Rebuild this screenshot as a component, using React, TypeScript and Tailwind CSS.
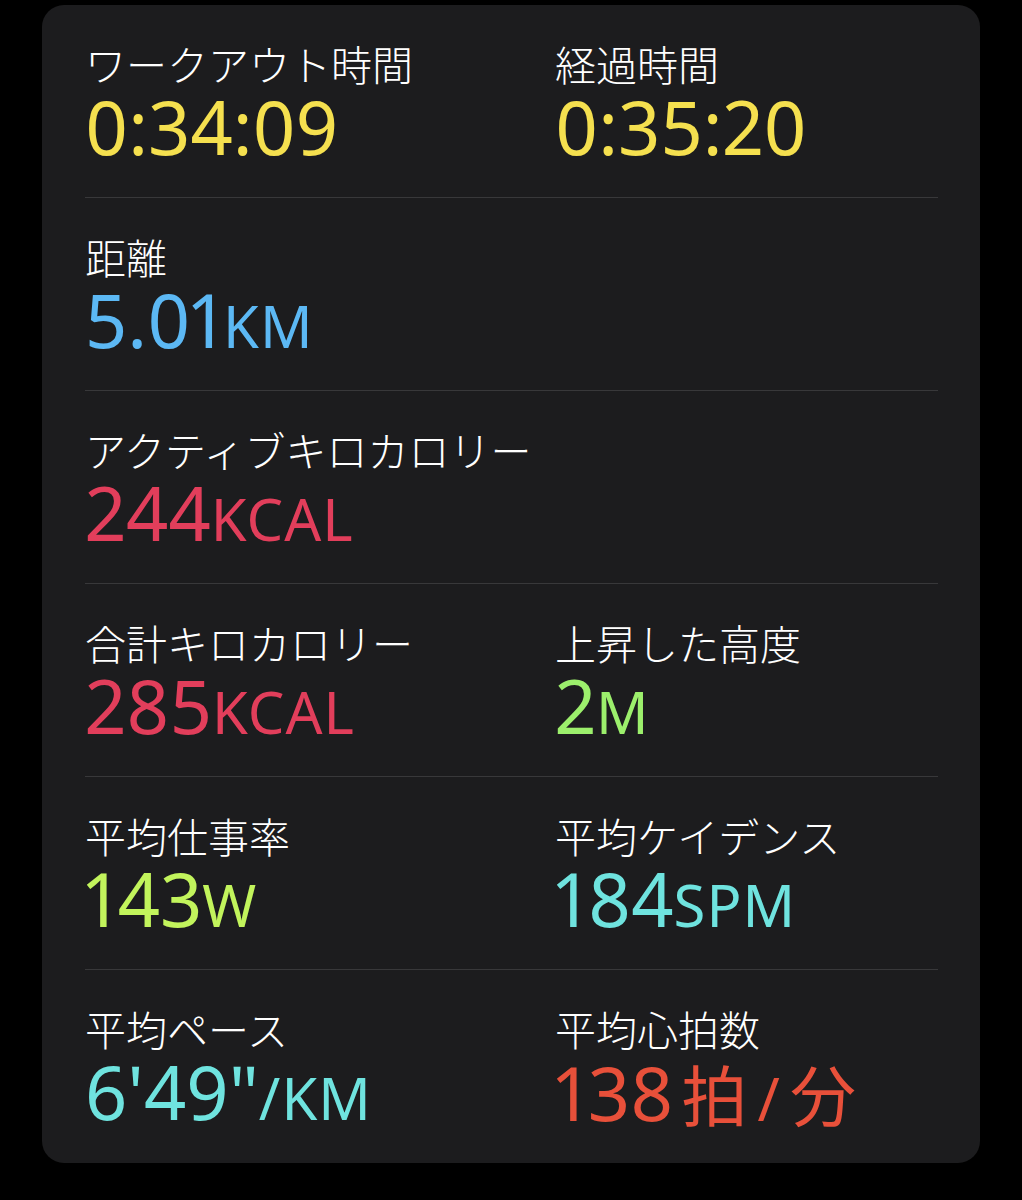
import React from "react";

const labelFont = { fontFamily: '"Noto Sans CJK JP", "Noto Sans", sans-serif' };

function Metric({
  label,
  value,
  unit,
  color,
}: {
  label: string;
  value: React.ReactNode;
  unit?: string;
  color: string;
}) {
  return (
    <div className="flex flex-col">
      <div className="text-[41px] leading-[48px] font-light text-white whitespace-nowrap" style={labelFont}>
        {label}
      </div>
      <div
        className={`text-[74px] leading-[80px] whitespace-nowrap proportional-nums [font-family:'Noto_Sans','Noto_Sans_CJK_JP',sans-serif] ${color}`}
      >
        {value}
        {unit && <span className="text-[58px] tracking-[1px] uppercase">{unit}</span>}
      </div>
    </div>
  );
}

function Row({ children, last }: { children: React.ReactNode; last?: boolean }) {
  return (
    <div
      className={`grid grid-cols-[470px_1fr] h-[193px] pt-[34px] ${
        last ? "" : "border-b border-[#38383a]"
      }`}
    >
      {children}
    </div>
  );
}

export default function App() {
  return (
    <div className="min-h-[1200px] w-full bg-black pt-[5px]">
      <div className="ml-[42px] w-[938px] h-[1158px] rounded-[22px] bg-[#1c1c1e] pl-[43px] pr-[42px]">
        <Row>
          <Metric label="ワークアウト時間" value="0:34:09" color="text-[#f5e04f]" />
          <Metric label="経過時間" value="0:35:20" color="text-[#f5e04f]" />
        </Row>
        <Row>
          <Metric label="距離" value="5.01" unit="km" color="text-[#5cb8f4]" />
        </Row>
        <Row>
          <Metric label="アクティブキロカロリー" value="244" unit="kcal" color="text-[#e23e5b]" />
        </Row>
        <Row>
          <Metric label="合計キロカロリー" value="285" unit="kcal" color="text-[#e23e5b]" />
          <Metric label="上昇した高度" value="2" unit="m" color="text-[#9cef6c]" />
        </Row>
        <Row>
          <Metric label="平均仕事率" value="143" unit="w" color="text-[#c2f45c]" />
          <Metric label="平均ケイデンス" value="184" unit="spm" color="text-[#6fe3df]" />
        </Row>
        <Row last>
          <Metric label="平均ペース" value={`6'49"`} unit="/km" color="text-[#6fe3df]" />
          <Metric
            label="平均心拍数"
            color="text-[#e8503a]"
            value={
              <>
                138
                <span className="ml-[8px] text-[66px]" style={labelFont}>
                  拍
                </span>
                <span className="mx-[10px] text-[60px]">/</span>
                <span className="text-[66px]" style={labelFont}>
                  分
                </span>
              </>
            }
          />
        </Row>
      </div>
    </div>
  );
}
